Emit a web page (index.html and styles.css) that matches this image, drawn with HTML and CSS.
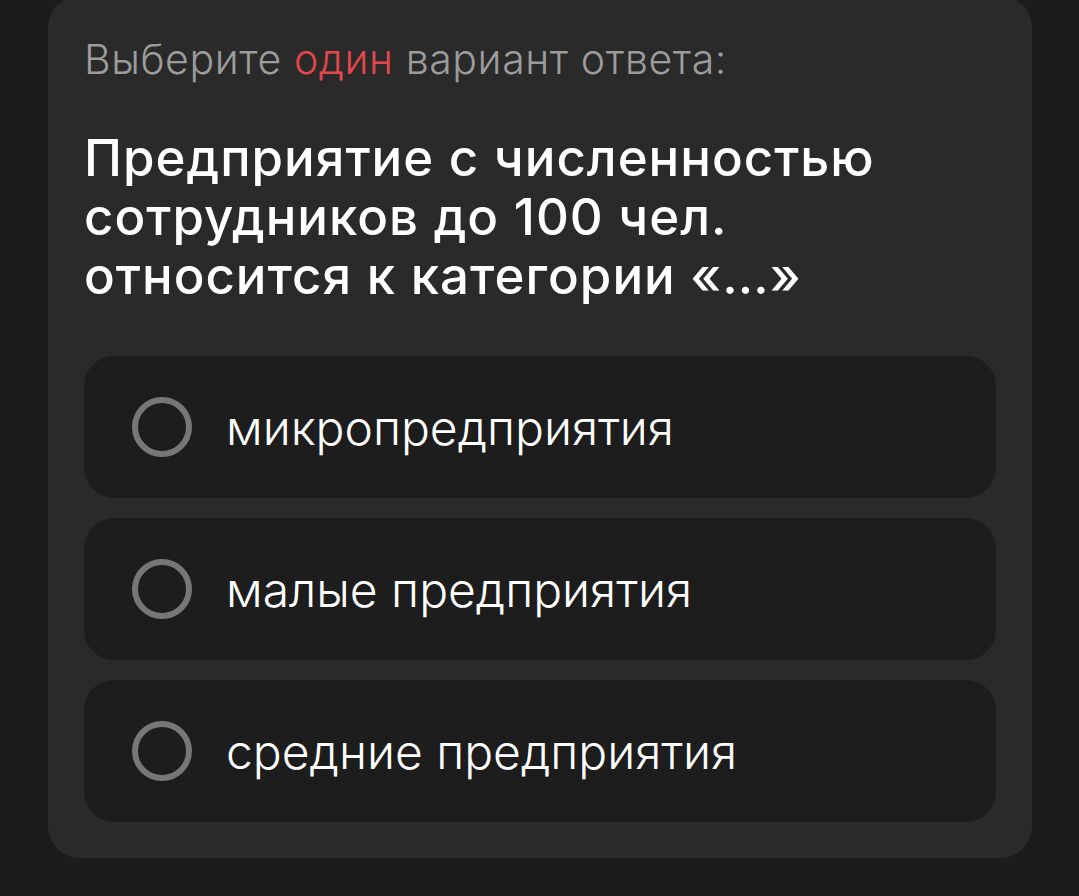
FILE: index.html
```html
<!doctype html>
<html lang="ru">
<head>
  <title>Тест</title>
  <meta charset="utf-8">
  <meta name="viewport" content="width=device-width, initial-scale=1">
  <link rel="stylesheet" href="styles.css">
</head>
<body>
  <div class="quiz-card">
    <p class="hint">Выберите <span class="hint-accent">один</span> вариант ответа:</p>
    <h2 class="question">Предприятие с численностью сотрудников до 100 чел. относится к категории «…»</h2>
    <div class="answers">
      <label class="answer">
        <span class="radio"></span>
        <span class="answer-text">микропредприятия</span>
      </label>
      <label class="answer">
        <span class="radio"></span>
        <span class="answer-text">малые предприятия</span>
      </label>
      <label class="answer">
        <span class="radio"></span>
        <span class="answer-text">средние предприятия</span>
      </label>
    </div>
  </div>
</body>
</html>
```

FILE: styles.css
```css
body {
  margin: 0;
  background-color: #1c1c1c;
  font-family: Inter, "Noto Sans", sans-serif;
  color: #ffffff;
}

.quiz-card {
  margin: -4px 47px 0 48px;
  padding: 39px 36px 36px 36px;
  background-color: #2a2a2a;
  border-radius: 32px;
}

.hint {
  margin: 0;
  font-size: 41px;
  font-weight: 300;
  line-height: 48px;
  letter-spacing: 0.6px;
  color: #9c9c9c;
}

.hint-accent {
  color: #e2474c;
}

.question {
  margin: 45px 0 0 0;
  font-size: 51px;
  font-weight: 450;
  line-height: 59px;
  letter-spacing: 1px;
  max-width: 820px;
}

.answers {
  display: flex;
  flex-direction: column;
  gap: 20px;
  margin-top: 51px;
}

.answer {
  display: flex;
  align-items: center;
  height: 142px;
  padding-left: 48px;
  background-color: #1d1d1d;
  border-radius: 30px;
}

.radio {
  width: 48px;
  height: 48px;
  border: 6px solid #777777;
  border-radius: 50%;
  flex-shrink: 0;
}

.answer-text {
  margin-left: 34px;
  font-size: 48px;
  font-weight: 300;
}
```
